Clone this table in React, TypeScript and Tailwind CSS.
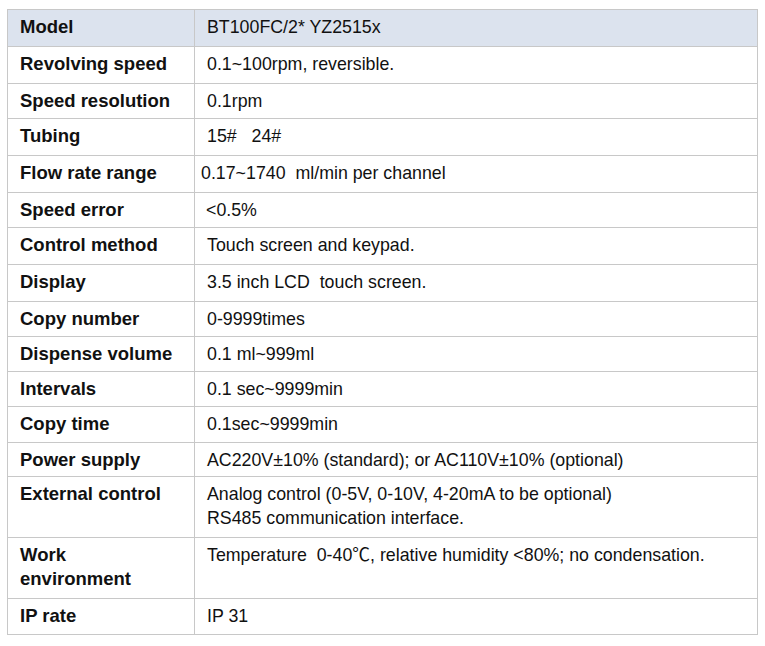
import React from 'react';

type SpecRow = {
  label: string;
  value: string;
  h: string;
  pad?: string;
  header?: boolean;
};

const rows: SpecRow[] = [
  { label: 'Model', value: 'BT100FC/2* YZ2515x', h: 'h-[37px]', header: true },
  { label: 'Revolving speed', value: '0.1~100rpm, reversible.', h: 'h-[37px]' },
  { label: 'Speed resolution', value: '0.1rpm', h: 'h-[35px]' },
  { label: 'Tubing', value: '15#   24#', h: 'h-[37px]' },
  { label: 'Flow rate range', value: '0.17~1740  ml/min per channel', h: 'h-[37px]', pad: 'pl-[6px]' },
  { label: 'Speed error', value: '<0.5%', h: 'h-[35px]', pad: 'pl-[11px]' },
  { label: 'Control method', value: 'Touch screen and keypad.', h: 'h-[37px]' },
  { label: 'Display', value: '3.5 inch LCD  touch screen.', h: 'h-[37px]' },
  { label: 'Copy number', value: '0-9999times', h: 'h-[35px]' },
  { label: 'Dispense volume', value: '0.1 ml~999ml', h: 'h-[35px]' },
  { label: 'Intervals', value: '0.1 sec~9999min', h: 'h-[35px]' },
  { label: 'Copy time', value: '0.1sec~9999min', h: 'h-[36px]' },
  { label: 'Power supply', value: 'AC220V±10% (standard); or AC110V±10% (optional)', h: 'h-[34px]' },
  {
    label: 'External control',
    value: 'Analog control (0-5V, 0-10V, 4-20mA to be optional)\nRS485 communication interface.',
    h: 'h-[61px]',
  },
  {
    label: 'Work\nenvironment',
    value: 'Temperature  0-40℃, relative humidity <80%; no condensation.',
    h: 'h-[61px]',
  },
  { label: 'IP rate', value: 'IP 31', h: 'h-[35px]' },
];

export default function App() {
  return (
    <div className="w-[765px] h-[646px] bg-white pt-[9px] pl-[7px] font-['Liberation_Sans','Noto_Sans_CJK_SC',sans-serif] leading-[24px] text-[#111]">
      <div className="w-[751px] border border-[#c8c8c8]">
        {rows.map((row, i) => (
          <div
            key={row.label}
            className={`flex ${row.h} ${i < rows.length - 1 ? 'border-b border-[#c8c8c8]' : ''} ${
              row.header ? 'bg-[#dce3ee]' : 'bg-white'
            }`}
          >
            <div className="w-[187px] shrink-0 border-r border-[#c8c8c8] pl-3 pt-[5px] text-[18.5px] font-bold whitespace-pre-line">
              {row.label}
            </div>
            <div className={`flex-1 pt-[5px] text-[17.8px] whitespace-pre ${row.pad ?? 'pl-3'}`}>{row.value}</div>
          </div>
        ))}
      </div>
    </div>
  );
}
